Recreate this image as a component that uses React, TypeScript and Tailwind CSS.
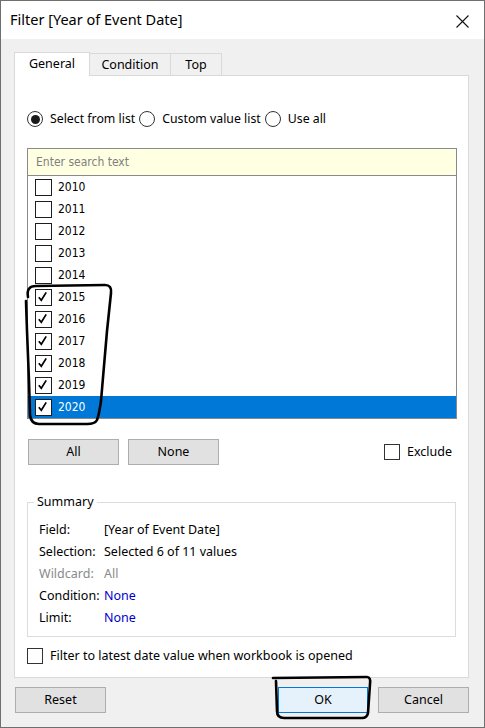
import React from "react";

const UI = { fontFamily: "'Noto Sans', 'Open Sans', sans-serif" } as React.CSSProperties;
const LIST = { fontFamily: "Tahoma, 'DejaVu Sans Condensed', 'DejaVu Sans', sans-serif" } as React.CSSProperties;

function Check() {
  return (
    <svg width="17" height="17" viewBox="0 0 17 17" className="block">
      <path d="M3.8 8.2 L6.3 11.3 L11.2 3.4" fill="none" stroke="#000" strokeWidth="1.7" strokeLinejoin="miter" />
    </svg>
  );
}

function ListBox({ checked }: { checked: boolean }) {
  return (
    <div className="w-[17px] h-[17px] border border-[#1e1e1e] bg-white box-border flex items-center justify-center">
      {checked ? <div className="-m-px"><Check /></div> : null}
    </div>
  );
}

function Radio({ checked }: { checked: boolean }) {
  return (
    <div className="w-[16px] h-[16px] rounded-full border border-[#333] bg-white flex items-center justify-center box-border">
      {checked ? <div className="w-[9px] h-[9px] rounded-full bg-[#1a1a1a]" /> : null}
    </div>
  );
}

function Btn({ label, w, primary }: { label: string; w: string; primary?: boolean }) {
  return (
    <div
      className={
        "h-[26px] flex items-center justify-center text-[12.5px] text-black border " +
        w +
        (primary ? " bg-[#e5f1fb] border-[#0078d7]" : " bg-[#e1e1e1] border-[#adadad]")
      }
    >
      {label}
    </div>
  );
}

export default function App() {
  const years = ["2010", "2011", "2012", "2013", "2014", "2015", "2016", "2017", "2018", "2019", "2020"];
  return (
    <div style={UI} className="relative w-[485px] h-[728px] border border-[#6f6f6f] bg-[#f0f0f0] flex flex-col overflow-hidden box-border">
      {/* Title bar */}
      <div className="h-[38px] bg-white flex items-center justify-between pl-[9px] pr-[15px] shrink-0">
        <span className="text-[14.5px] text-black">Filter [Year of Event Date]</span>
        <svg width="13" height="13" viewBox="0 0 13 13" className="mt-[2px]">
          <path d="M0.5 0.5 L12.5 12.5 M12.5 0.5 L0.5 12.5" stroke="#111" strokeWidth="1.1" />
        </svg>
      </div>

      {/* Body */}
      <div className="flex-1 flex flex-col pl-[13px] pr-[15px] pt-[13px]">
        {/* Tabs */}
        <div className="flex items-end h-[23px] relative z-10">
          <div className="w-[76px] h-[24px] -mb-px bg-white border border-[#d9d9d9] border-b-0 flex items-center justify-center text-[12.5px] text-black">
            General
          </div>
          <div className="w-[81px] h-[22px] bg-[#f0f0f0] border border-[#d9d9d9] border-l-0 border-b-0 flex items-center justify-center text-[12.5px] text-black pt-[2px]">
            Condition
          </div>
          <div className="w-[51px] h-[22px] bg-[#f0f0f0] border border-[#d9d9d9] border-l-0 border-b-0 flex items-center justify-center text-[12.5px] text-black pt-[2px]">
            Top
          </div>
        </div>

        {/* Panel */}
        <div className="w-[455px] h-[603px] bg-white border border-[#d9d9d9] flex flex-col pl-[12px] pr-[11px]">
          {/* Radios */}
          <div className="flex items-center h-[16px] mt-[35px] text-[12.3px] text-black">
            <Radio checked />
            <span className="ml-[7px] mr-[4px]">Select from list</span>
            <Radio checked={false} />
            <span className="ml-[7px] mr-[4px]">Custom value list</span>
            <Radio checked={false} />
            <span className="ml-[7px]">Use all</span>
          </div>

          {/* List box */}
          <div className="mt-[21px] w-[430px] border border-[#8a8a8a] flex flex-col" style={LIST}>
            <div className="h-[27px] bg-[#ffffe1] border-b border-[#8a8a8a] flex items-center pl-[8px] text-[12px] text-[#808080]">
              Enter search text
            </div>
            {years.map((y, i) => {
              const sel = i === years.length - 1;
              return (
                <div
                  key={y}
                  className={"h-[22px] flex items-center pl-[7px] " + (sel ? "bg-[#0078d7] text-white" : "text-black")}
                >
                  <ListBox checked={i >= 5} />
                  <span className="ml-[6px] text-[12px]">{y}</span>
                </div>
              );
            })}
          </div>

          {/* All / None / Exclude */}
          <div className="mt-[20px] flex items-center">
            <div className="ml-px"><Btn label="All" w="w-[91px]" /></div>
            <div className="ml-[9px]"><Btn label="None" w="w-[91px]" /></div>
            <div className="ml-auto mr-[5px] flex items-center text-[12.5px] text-black">
              <div className="w-[16px] h-[16px] border border-[#333] bg-white" />
              <span className="ml-[7px]">Exclude</span>
            </div>
          </div>

          {/* Summary */}
          <fieldset className="mt-[29px] w-[429px] h-[143px] border border-[#dcdcdc] pl-[11px] pt-[9px]">
            <legend className="ml-[-5px] px-[3px] text-[12.5px] text-black leading-[16px]">Summary</legend>
            <div className="flex flex-col text-[12.5px]">
              {[
                ["Field:", "[Year of Event Date]", "text-black", "text-black"],
                ["Selection:", "Selected 6 of 11 values", "text-black", "text-black"],
                ["Wildcard:", "All", "text-[#8a8a8a]", "text-[#8a8a8a]"],
                ["Condition:", "None", "text-black", "text-[#0000cc]"],
                ["Limit:", "None", "text-black", "text-[#0000cc]"],
              ].map(([a, b, ca, cb]) => (
                <div key={a} className="h-[22px] flex items-center">
                  <span className={"w-[65px] " + ca}>{a}</span>
                  <span className={cb}>{b}</span>
                </div>
              ))}
            </div>
          </fieldset>

          {/* Latest date */}
          <div className="mt-[10px] flex items-center text-[12.5px] text-black">
            <div className="w-[16px] h-[16px] border border-[#333] bg-white" />
            <span className="ml-[7px]">Filter to latest date value when workbook is opened</span>
          </div>
        </div>

        {/* Bottom buttons */}
        <div className="mt-[9px] flex items-center">
          <div className="ml-px"><Btn label="Reset" w="w-[91px]" /></div>
          <div className="ml-auto"><Btn label="OK" w="w-[90px]" primary /></div>
          <div className="ml-[10px]"><Btn label="Cancel" w="w-[91px]" /></div>
        </div>
      </div>

      {/* Hand-drawn annotations */}
      <svg className="absolute left-0 top-0 pointer-events-none" width="485" height="728" viewBox="0 0 485 728">
        <path
          d="M27 296 Q25 285 35 285 L104 284 Q111 284 110 292 L106 330 L100 400 Q98 414 96 419 Q94 423 86 423 L38 423 Q30 423 29 414 L28 380 L26 330 L25 300"
          fill="none"
          stroke="#000"
          strokeWidth="2.6"
          strokeLinecap="round"
          strokeLinejoin="round"
        />
        <path
          d="M272 677 L366 676 Q370 676 369 683 L367 712 Q366 717 361 717 L283 717 Q276 717 276 710 L275 680"
          fill="none"
          stroke="#000"
          strokeWidth="2.6"
          strokeLinecap="round"
          strokeLinejoin="round"
        />
      </svg>
    </div>
  );
}
